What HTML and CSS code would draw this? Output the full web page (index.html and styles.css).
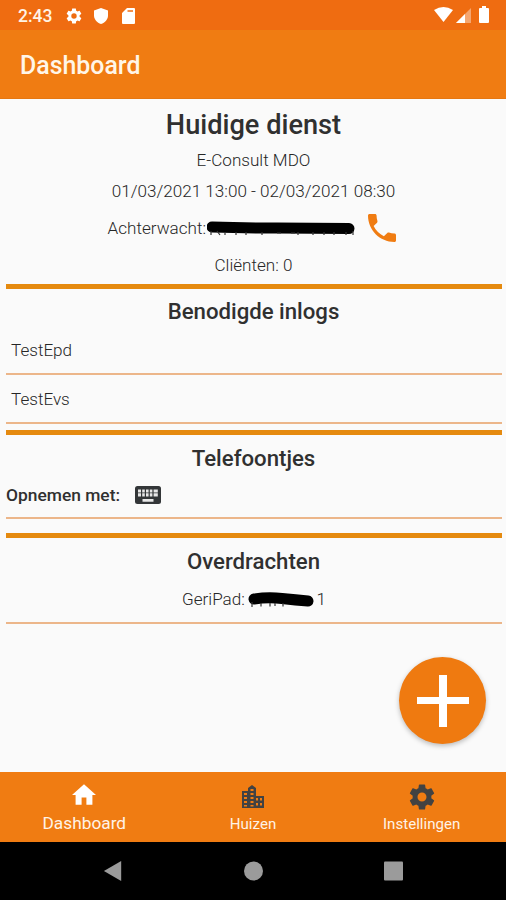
FILE: index.html
```html
<!DOCTYPE html>
<html lang="nl">
<head>
<meta charset="utf-8">
<title>Dashboard</title>
<link rel="stylesheet" href="styles.css">
</head>
<body>
<svg class="defs" width="0" height="0">
  <symbol id="gear" viewBox="0 0 24 24"><path fill-rule="evenodd" d="M19.43 12.98c.04-.32.07-.64.07-.98s-.03-.66-.07-.98l2.11-1.65c.19-.15.24-.42.12-.64l-2-3.46c-.12-.22-.39-.3-.61-.22l-2.49 1c-.52-.4-1.08-.73-1.69-.98l-.38-2.65C14.46 2.18 14.25 2 14 2h-4c-.25 0-.46.18-.49.42l-.38 2.65c-.61.25-1.17.59-1.69.98l-2.49-1c-.23-.09-.49 0-.61.22l-2 3.46c-.13.22-.07.49.12.64l2.11 1.65c-.04.32-.07.65-.07.98s.03.66.07.98l-2.11 1.65c-.19.15-.24.42-.12.64l2 3.46c.12.22.39.3.61.22l2.49-1c.52.4 1.08.73 1.69.98l.38 2.65c.03.24.24.42.49.42h4c.25 0 .46-.18.49-.42l.38-2.65c.61-.25 1.17-.59 1.69-.98l2.49 1c.23.09.49 0 .61-.22l2-3.46c.12-.22.07-.49-.12-.64zM12 15.6a3.6 3.6 0 1 1 0-7.2 3.6 3.6 0 0 1 0 7.2z"/></symbol>
</svg>
<div class="phone">
  <header class="status">
    <span class="clock">2:43</span>
    <svg class="s-gear"><use href="#gear"/></svg>
    <svg class="s-shield" viewBox="0 0 14 16"><path d="M7 0l7 2.600v4.900c0 3.900-3 7.400-7 8.500-4-1.100-7-4.600-7-8.500V2.600z"/></svg>
    <svg class="s-sd" viewBox="0 0 13 16"><path fill-rule="evenodd" d="M5 0h7a1 1 0 0 1 1 1v14a1 1 0 0 1-1 1H1a1 1 0 0 1-1-1V5zM5.500 2.200v1.600h5.500V2.200z"/></svg>
    <span class="spacer"></span>
    <svg class="s-wifi" viewBox="0 0 19 15"><path d="M0 3Q9.500-3 19 3L9.500 15z"/></svg>
    <svg class="s-signal" viewBox="0 0 15 15"><path opacity=".4" d="M15 0v15H0z"/><path d="M9 6v9H0z"/></svg>
    <svg class="s-battery" viewBox="0 0 10 17"><path d="M3 0h4v2h2a1 1 0 0 1 1 1v13a1 1 0 0 1-1 1H1a1 1 0 0 1-1-1V3a1 1 0 0 1 1-1h2z"/></svg>
  </header>
  <div class="appbar"><h1>Dashboard</h1></div>
  <main>
    <section class="current">
      <h2 class="big">Huidige dienst</h2>
      <p class="consult">E-Consult MDO</p>
      <p class="dates">01/03/2021 13:00 - 02/03/2021 08:30</p>
      <div class="backup">
        <span class="backup-label">Achterwacht:</span>
        <svg class="redact-long" viewBox="0 0 150 18"><path class="ink" d="M5 7Q35 8 70 8T142 8.500"/><path class="trace" d="M4 11v4M10 11l3 4M18 12v3M29 12v3M39 12v3M55 12v3M70 13h4M84 13h4M91 12v3M106 12v3M117 12v3M127 12v3M139 12v3M146 11v4"/></svg>
        <svg class="call" viewBox="3 3 18 18"><path d="M6.620 10.790c1.440 2.830 3.760 5.140 6.590 6.590l2.200-2.200c.27-.27.67-.36 1.020-.24 1.120.37 2.330.57 3.570.57.55 0 1 .45 1 1V20c0 .55-.45 1-1 1C10.610 21 3 13.390 3 4c0-.55.45-1 1-1h3.500c.55 0 1 .45 1 1 0 1.250.2 2.450.57 3.570.11.35.03.74-.25 1.020z"/></svg>
      </div>
      <p class="clients">Cliënten: 0</p>
    </section>
    <section class="logins">
      <h2>Benodigde inlogs</h2>
      <ul>
        <li>TestEpd</li>
        <li>TestEvs</li>
      </ul>
    </section>
    <section class="calls">
      <h2>Telefoontjes</h2>
      <div class="answer">
        <strong>Opnemen met:</strong>
        <svg class="keyboard" viewBox="0 0 26 18"><rect width="26" height="18" rx="2.500" fill="#333638"/><path fill="#e8e8e8" d="M3 3.500h3v3H3zM7.200 3.500h2.600v3H7.200zM11 3.500h2.600v3H11zM14.800 3.500h2.600v3h-2.600zM18.600 3.500h4.200v3h-4.200zM3 7.200h3v3.200H3zM7.200 7.200h2.600v3.200H7.200zM11 7.200h2.600v3.200H11zM14.800 7.200h2.600v3.200h-2.600zM18.600 7.200h4.200v3.200h-4.200zM7.500 13h11v2.800h-11z"/></svg>
      </div>
    </section>
    <section class="handover">
      <h2>Overdrachten</h2>
      <div class="patient">
        <span class="patient-label">GeriPad:</span>
        <svg class="redact-short" viewBox="0 0 68 16"><path class="ink" d="M6 7Q20 5 34 6.500T60 9"/><path class="trace" d="M4 10v5M13 11v3.500M22 11v3.500M27 11v3M35 11v3.500"/></svg>
        <span class="patient-no">1</span>
      </div>
    </section>
    <button class="fab" aria-label="Toevoegen"><svg viewBox="0 0 52 52"><path d="M22 0h8v22h22v7H30v23h-8V29H0v-7h22z"/></svg></button>
  </main>
  <nav class="tabs">
    <a class="tab active"><svg class="home" viewBox="2 3 20 17"><path d="M10 20v-6h4v6h5v-8h3L12 3 2 12h3v8z"/></svg><span>Dashboard</span></a>
    <a class="tab"><svg class="city" viewBox="0 0 24 24"><path fill-rule="evenodd" d="M1 6h6V3l4-3 4 3v8h8v12H1zM3 8v2h3V8zM3 12v2h3v-2zM3 16v2h3v-2zM3 20v1.500h3V20zM9.500 4v2h3V4zM9.500 8v2h3V8zM9.500 12v2h3v-2zM9.500 16v2h3v-2zM9.500 20v1.500h3V20zM15 13v2.500h2V13zM15 18v2.500h2V18zM19 13v2.500h2V13zM19 18v2.500h2V18z"/></svg><span>Huizen</span></a>
    <a class="tab"><svg class="cog"><use href="#gear"/></svg><span>Instellingen</span></a>
  </nav>
  <footer class="system">
    <svg viewBox="0 0 20 22"><path d="M19 0v22L0 11z"/></svg>
    <svg viewBox="0 0 20 20"><circle cx="10.500" cy="10" r="9.500"/></svg>
    <svg viewBox="0 0 20 20"><rect x="1" y=".5" width="19" height="19" rx="1"/></svg>
  </footer>
</div>
</body>
</html>
```
FILE: styles.css
```css
* { box-sizing: border-box; }
body { margin: 0; font-family: Roboto, sans-serif; color: #4a4a4a; background: #fafafa; }
h1, h2, p, ul { margin: 0; padding: 0; font-weight: 500; }
svg { display: block; flex: none; }
.defs { position: absolute; }
.phone { width: 506px; height: 900px; display: flex; flex-direction: column; overflow: hidden; }

.status { height: 30px; background: #ef6c11; display: flex; align-items: center; padding: 1px 17px 0 18px; color: #fff3e6; fill: #fff; }
.clock { font-size: 17.500px; font-weight: 500; width: 48px; line-height: 30px; }
.spacer { flex: 1; }
.s-gear { width: 18px; height: 18px; margin-left: -1px; }
.s-shield { width: 14px; height: 16px; margin-left: 11px; }
.s-sd { width: 13px; height: 16px; margin-left: 14px; }
.s-wifi { width: 19px; height: 15px; margin-top: -2px; }
.s-signal { width: 15px; height: 15px; margin: 0 8px 0 3px; }
.s-battery { width: 10px; height: 17px; margin-top: -2px; }

.appbar { height: 69px; background: #f07c12; border-bottom: 1px solid #e57712; padding-left: 20px; display: flex; align-items: center; }
h1 { font-size: 24.900px; color: #fff6e8; line-height: 30px; margin-top: 4px; }

main { flex: 1; position: relative; padding: 0 4px 0 6px; }
section { display: flex; flex-direction: column; align-items: center; }
h2 { font-size: 22.200px; line-height: 30px; color: #303030; padding-right: 1px; }
h2.big { font-size: 27.200px; line-height: 32px; margin-top: 10px; }
p, li, .backup, .patient { font-size: 17.100px; font-weight: 300; line-height: 24px; color: #262626; }
p { padding-right: 1px; }
.current { height: 190px; border-bottom: 5px solid #e58a0f; }
.consult { margin-top: 7px; }
.dates { margin-top: 7px; }
.backup { display: flex; align-items: center; height: 36px; margin-top: 7px; width: 293px; }
.backup-label { width: 98px; white-space: nowrap; }
.redact-long { width: 150px; height: 18px; margin: 1px 0 0 1px; }
.ink { fill: none; stroke: #000; stroke-width: 11; stroke-linecap: round; }
.trace { fill: none; stroke: #333; stroke-width: 1.200; }
.call { width: 28px; height: 28px; margin: 0 0 0 11px; fill: #f07c12; }
.clients { margin-top: 7px; }

.logins { height: 146px; padding-top: 7px; border-bottom: 5px solid #e58a0f; }
.logins ul { list-style: none; width: 100%; }
li { height: 49px; padding: 12px 5px 0; border-bottom: 2px solid #ecb68a; }
li:first-child { height: 49px; }
.calls { height: 103px; padding-top: 8px; border-bottom: 5px solid #e58a0f; }
.answer { width: 100%; height: 46px; display: flex; align-items: center; border-bottom: 2px solid #ecb68a; }
.answer strong { font-size: 17.400px; font-weight: 500; color: #303030; width: 129px; white-space: nowrap; }
.keyboard { width: 26px; height: 18px; }
.handover { height: 86px; padding-top: 8px; border-bottom: 2px solid #ecb68a; }
.patient { display: flex; align-items: center; height: 24px; margin-top: 11px; width: 144px; }
.patient-label { width: 66px; white-space: nowrap; }
.redact-short { width: 68px; height: 16px; margin-top: 2px; }
.patient-no { margin-left: auto; }

.fab { position: absolute; right: 20px; bottom: 28px; width: 87px; height: 87px; border: 0; border-radius: 50%; background: #ef7a10; box-shadow: 0 2px 5px rgba(0,0,0,.25); display: grid; place-items: center; padding: 0; }
.fab svg { width: 52px; height: 52px; fill: #fff; }

.tabs { height: 70px; background: #f07c12; display: grid; grid-template-columns: repeat(3, 1fr); }
.tab { display: flex; flex-direction: column; align-items: center; color: #fff3e6; fill: #424242; font-size: 15.100px; line-height: 20px; padding-top: 13px; }
.tab span { margin-top: auto; margin-bottom: 8px; }
.tab.active { font-size: 17.300px; fill: #fff; padding-top: 12px; }
.tab.active span { margin-bottom: 9px; }
.home { width: 24px; height: 21px; }
.city { width: 24px; height: 24px; }
.cog { width: 30px; height: 30px; margin-top: -3px; }

.system { height: 58px; background: #000; display: flex; justify-content: center; align-items: center; gap: 120px; fill: #9b9b9b; }
.system svg { width: 20px; height: 20px; }
```
